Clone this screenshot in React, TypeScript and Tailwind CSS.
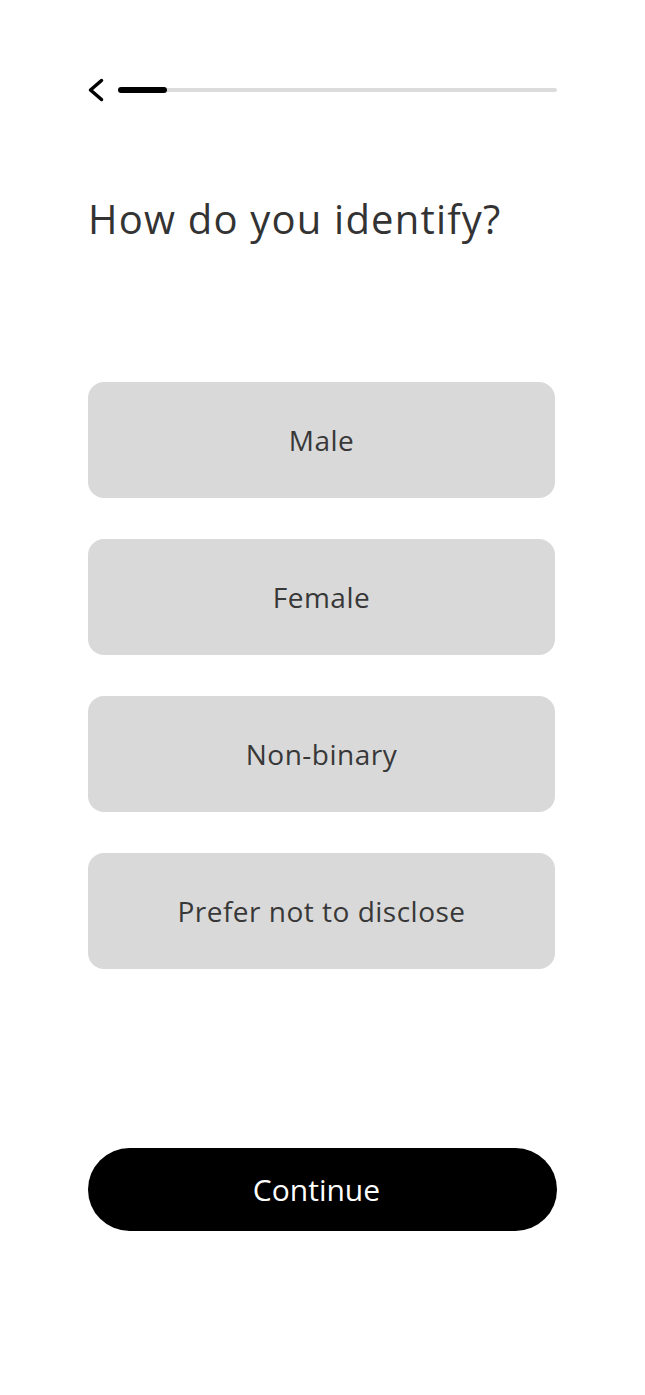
const options = ["Male", "Female", "Non-binary", "Prefer not to disclose"];

export default function App() {
  return (
    <div className="w-[645px] min-h-[1395px] bg-white px-[88px] pt-[78px] font-['Open_Sans','Liberation_Sans',sans-serif]">
      <div className="flex items-center h-[24px]">
        <svg width="17" height="24" viewBox="0 0 17 24" fill="none">
          <path d="M13.5 2.5 L2.5 12 L13.5 21.5" stroke="#000" strokeWidth="3.5" strokeLinecap="round" strokeLinejoin="round" />
        </svg>
        <div className="ml-[13px] flex-1 flex items-center">
          <div className="w-[49px] h-[6px] rounded-full bg-black" />
          <div className="flex-1 h-[4px] rounded-r-full bg-[#dcdcdc]" />
        </div>
      </div>

      <h1 className="mt-[93px] text-[40px] leading-[48px] tracking-[1.2px] text-[#333333]">How do you identify?</h1>

      <div className="mt-[139px] w-[467px] flex flex-col gap-[41px]">
        {options.map((o) => (
          <button
            key={o}
            className="h-[116px] w-full rounded-[16px] bg-[#d9d9d9] text-[28px] tracking-[0.5px] font-medium text-[#383838] flex items-center justify-center"
          >
            {o}
          </button>
        ))}
      </div>

      <button className="mt-[179px] h-[83px] w-[469px] rounded-full bg-black text-white text-[30px] pr-[12px] flex items-center justify-center">
        Continue
      </button>
    </div>
  );
}
